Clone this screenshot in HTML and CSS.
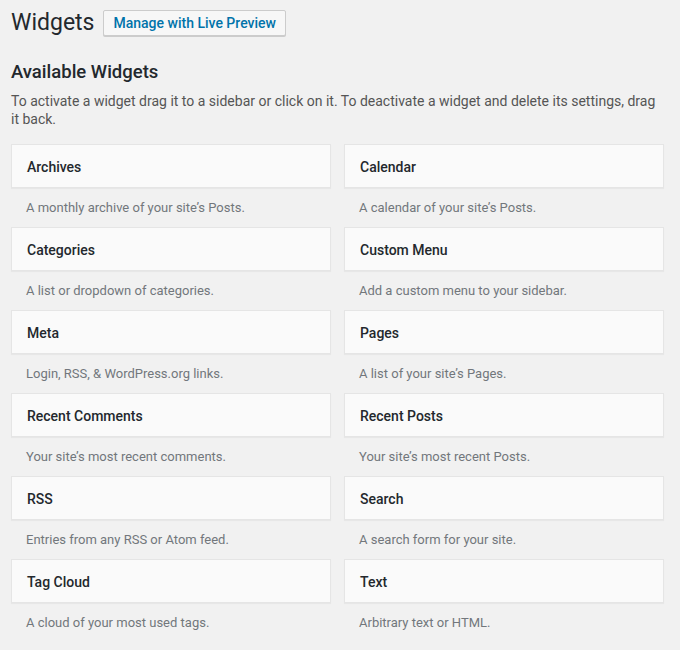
FILE: index.html
```html
<!DOCTYPE html>
<html lang="en">
<head>
    <meta charset="UTF-8">
    <title>Widgets</title>
    <link rel="stylesheet" href="styles.css">
</head>
<body>
<div class="wrap">
    <div class="page-head">
        <h1>Widgets</h1>
        <a href="javascript:;" class="btn">Manage with Live Preview</a>
    </div>
    <h2>Available Widgets</h2>
    <p class="intro">To activate a widget drag it to a sidebar or click on it. To deactivate a widget and delete its settings, drag it back.</p>
    <div class="widget-list">
        <div class="widget">
            <div class="widget-title">Archives</div>
            <div class="widget-desc">A monthly archive of your site’s Posts.</div>
        </div>
        <div class="widget">
            <div class="widget-title">Calendar</div>
            <div class="widget-desc">A calendar of your site’s Posts.</div>
        </div>
        <div class="widget">
            <div class="widget-title">Categories</div>
            <div class="widget-desc">A list or dropdown of categories.</div>
        </div>
        <div class="widget">
            <div class="widget-title">Custom Menu</div>
            <div class="widget-desc">Add a custom menu to your sidebar.</div>
        </div>
        <div class="widget">
            <div class="widget-title">Meta</div>
            <div class="widget-desc">Login, RSS, &amp; WordPress.org links.</div>
        </div>
        <div class="widget">
            <div class="widget-title">Pages</div>
            <div class="widget-desc">A list of your site’s Pages.</div>
        </div>
        <div class="widget">
            <div class="widget-title">Recent Comments</div>
            <div class="widget-desc">Your site’s most recent comments.</div>
        </div>
        <div class="widget">
            <div class="widget-title">Recent Posts</div>
            <div class="widget-desc">Your site’s most recent Posts.</div>
        </div>
        <div class="widget">
            <div class="widget-title">RSS</div>
            <div class="widget-desc">Entries from any RSS or Atom feed.</div>
        </div>
        <div class="widget">
            <div class="widget-title">Search</div>
            <div class="widget-desc">A search form for your site.</div>
        </div>
        <div class="widget">
            <div class="widget-title">Tag Cloud</div>
            <div class="widget-desc">A cloud of your most used tags.</div>
        </div>
        <div class="widget">
            <div class="widget-title">Text</div>
            <div class="widget-desc">Arbitrary text or HTML.</div>
        </div>
    </div>
</div>
</body>
</html>
```

FILE: styles.css
```css
*{margin: 0;padding: 0;box-sizing: border-box;}
html, body{background: #f1f1f1;}
body{font-family: Roboto, "Noto Sans", sans-serif;font-size: 13px;color: #444;}
a{text-decoration: none;}
.wrap{padding: 8px 16px 0 11px;}
.page-head{display: flex;align-items: center;height: 29px;}
h1{font-size: 23px;font-weight: 400;line-height: 29px;color: #23282d;}
.btn{display: inline-block;margin-left: 9px;height: 26px;line-height: 24px;padding: 0 9px;border: 1px solid #ccc;border-radius: 2px;background: #f7f7f7;color: #0073aa;font-weight: 500;font-size: 14px;box-shadow: 0 1px 0 #ccc;}
h2{margin-top: 23px;font-size: 18.5px;line-height: 24px;font-weight: 500;color: #23282d;}
.intro{margin-top: 8px;font-size: 14px;line-height: 18px;color: #555;}
.widget-list{margin-top: 16px;display: grid;grid-template-columns: 320px 320px;column-gap: 13px;}
.widget-title{height: 44px;line-height: 42px;padding: 1px 15px 0;background: #fafafa;border: 1px solid #e5e5e5;box-shadow: 0 1px 1px rgba(0,0,0,.04);font-size: 14px;font-weight: 500;color: #23282d;}
.widget-desc{padding: 11px 15px 10px;line-height: 18px;color: #72777c;}
```
